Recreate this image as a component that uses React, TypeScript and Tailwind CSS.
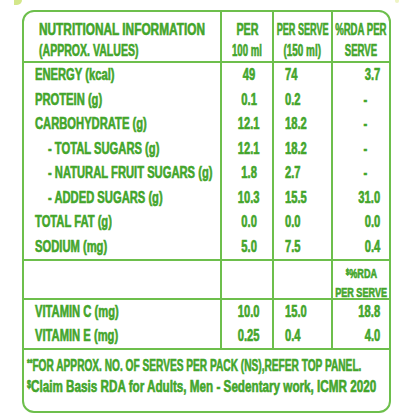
import React from "react";

type R = { label: string; sub?: boolean; a: string; b: string; c: string };

const rows: R[] = [
  { label: "ENERGY (kcal)", a: "49", b: "74", c: "3.7" },
  { label: "PROTEIN (g)", a: "0.1", b: "0.2", c: "-" },
  { label: "CARBOHYDRATE (g)", a: "12.1", b: "18.2", c: "-" },
  { label: "- TOTAL SUGARS (g)", sub: true, a: "12.1", b: "18.2", c: "-" },
  { label: "- NATURAL FRUIT SUGARS (g)", sub: true, a: "1.8", b: "2.7", c: "-" },
  { label: "- ADDED SUGARS (g)", sub: true, a: "10.3", b: "15.5", c: "31.0" },
  { label: "TOTAL FAT (g)", a: "0.0", b: "0.0", c: "0.0" },
  { label: "SODIUM (mg)", a: "5.0", b: "7.5", c: "0.4" },
];

const vits: R[] = [
  { label: "VITAMIN C (mg)", a: "10.0", b: "15.0", c: "18.8" },
  { label: "VITAMIN E (mg)", a: "0.25", b: "0.4", c: "4.0" },
];

function Row({ r, h }: { r: R; h: string }) {
  return (
    <div className={`flex ${h}`}>
      <div
        className={`w-[198px] shrink-0 border-r-2 border-[#6dbf4c] whitespace-nowrap ${
          r.sub ? "pl-[24px]" : "pl-[11px]"
        }`}
      >
        <span className="inline-block origin-left scale-x-[0.7]">{r.label}</span>
      </div>
      <div className="w-[52px] shrink-0 border-r-2 border-[#6dbf4c] flex justify-center pl-[4px] whitespace-nowrap">
        <span className="inline-block origin-center scale-x-[0.7]">{r.a}</span>
      </div>
      <div className="w-[59px] shrink-0 border-r-2 border-[#6dbf4c] pl-[11px] whitespace-nowrap">
        <span className="inline-block origin-left scale-x-[0.7]">{r.b}</span>
      </div>
      <div
        className={`flex-1 min-w-0 text-right whitespace-nowrap ${
          r.c === "-" ? "pr-[22px]" : "pr-[9px]"
        }`}
      >
        <span className="inline-block origin-right scale-x-[0.7]">{r.c}</span>
      </div>
    </div>
  );
}

export default function App() {
  return (
    <div
      className="relative w-[416px] h-[416px] bg-white overflow-hidden text-[#43a52b] font-bold text-[16px] [-webkit-text-stroke:0.6px_#43a52b]"
      style={{ fontFamily: '"Liberation Sans", Arial, sans-serif' }}
    >
      <div className="absolute left-[14px] top-0 w-[8px] h-[5px] bg-[#d3e78a] rounded-br-full" />
      <div className="absolute left-[395px] top-0 w-[4px] h-[3px] bg-[#eef4c4] rounded-b-full" />
      <div className="pl-[22px] pt-[10px]">
        <div className="w-[369px] h-[403px] border-2 border-[#6dbf4c] rounded-[12px] flex flex-col">
          {/* Header */}
          <div className="flex h-[51px] border-b-2 border-[#6dbf4c] leading-[21px]">
            <div className="w-[198px] shrink-0 border-r-2 border-[#6dbf4c] pl-[15px] pt-[7px] whitespace-nowrap">
              <div>
                <span className="inline-block origin-left scale-x-[0.74]">NUTRITIONAL INFORMATION</span>
              </div>
              <div>
                <span className="inline-block origin-left scale-x-[0.66]">(APPROX. VALUES)</span>
              </div>
            </div>
            <div className="w-[52px] shrink-0 border-r-2 border-[#6dbf4c] flex flex-col items-center pt-[7px] whitespace-nowrap">
              <span className="inline-block origin-center scale-x-[0.67]">PER</span>
              <span className="inline-block origin-center scale-x-[0.6]">100 ml</span>
            </div>
            <div className="w-[59px] shrink-0 border-r-2 border-[#6dbf4c] flex flex-col items-center pt-[7px] whitespace-nowrap">
              <span className="inline-block origin-center scale-x-[0.57]">PER SERVE</span>
              <span className="inline-block origin-center scale-x-[0.62]">(150 ml)</span>
            </div>
            <div className="flex-1 min-w-0 flex flex-col items-center pt-[7px] whitespace-nowrap">
              <span className="inline-block origin-center scale-x-[0.6]">%RDA PER</span>
              <span className="inline-block origin-center scale-x-[0.6]">SERVE</span>
            </div>
          </div>

          {/* Body */}
          <div className="flex flex-col border-b-2 border-[#6dbf4c] leading-[24.5px]">
            {rows.map((r) => (
              <Row key={r.label} r={r} h="h-[24.5px]" />
            ))}
          </div>

          {/* RDA sub header */}
          <div className="flex h-[39px] border-b-2 border-[#6dbf4c]">
            <div className="w-[198px] shrink-0 border-r-2 border-[#6dbf4c]" />
            <div className="w-[52px] shrink-0 border-r-2 border-[#6dbf4c]" />
            <div className="w-[59px] shrink-0 border-r-2 border-[#6dbf4c]" />
            <div className="flex-1 min-w-0 flex flex-col items-center pt-[4px] text-[13px] leading-[17px] whitespace-nowrap">
              <span className="inline-block origin-center scale-x-[0.7]">
                <span className="text-[9px] relative -top-[3px]">$</span>%RDA
              </span>
              <span className="inline-block origin-center scale-x-[0.7]">PER SERVE</span>
            </div>
          </div>

          {/* Vitamins */}
          <div className="flex flex-col border-b-2 border-[#6dbf4c] leading-[24px]">
            {vits.map((r) => (
              <Row key={r.label} r={r} h="h-[24px]" />
            ))}
          </div>

          {/* Footnotes */}
          <div className="flex-1 pl-[3px] pt-[6px] leading-[19px] whitespace-nowrap">
            <div>
              <span className="inline-block origin-left scale-x-[0.634]">
                <span className="text-[11px] relative -top-[4px]">**</span>FOR APPROX. NO. OF SERVES PER PACK (NS),REFER TOP PANEL.
              </span>
            </div>
            <div>
              <span className="inline-block origin-left scale-x-[0.73]">
                <span className="text-[10px] relative -top-[4px]">$</span>Claim Basis RDA for Adults, Men - Sedentary work, ICMR 2020
              </span>
            </div>
          </div>
        </div>
      </div>
    </div>
  );
}
